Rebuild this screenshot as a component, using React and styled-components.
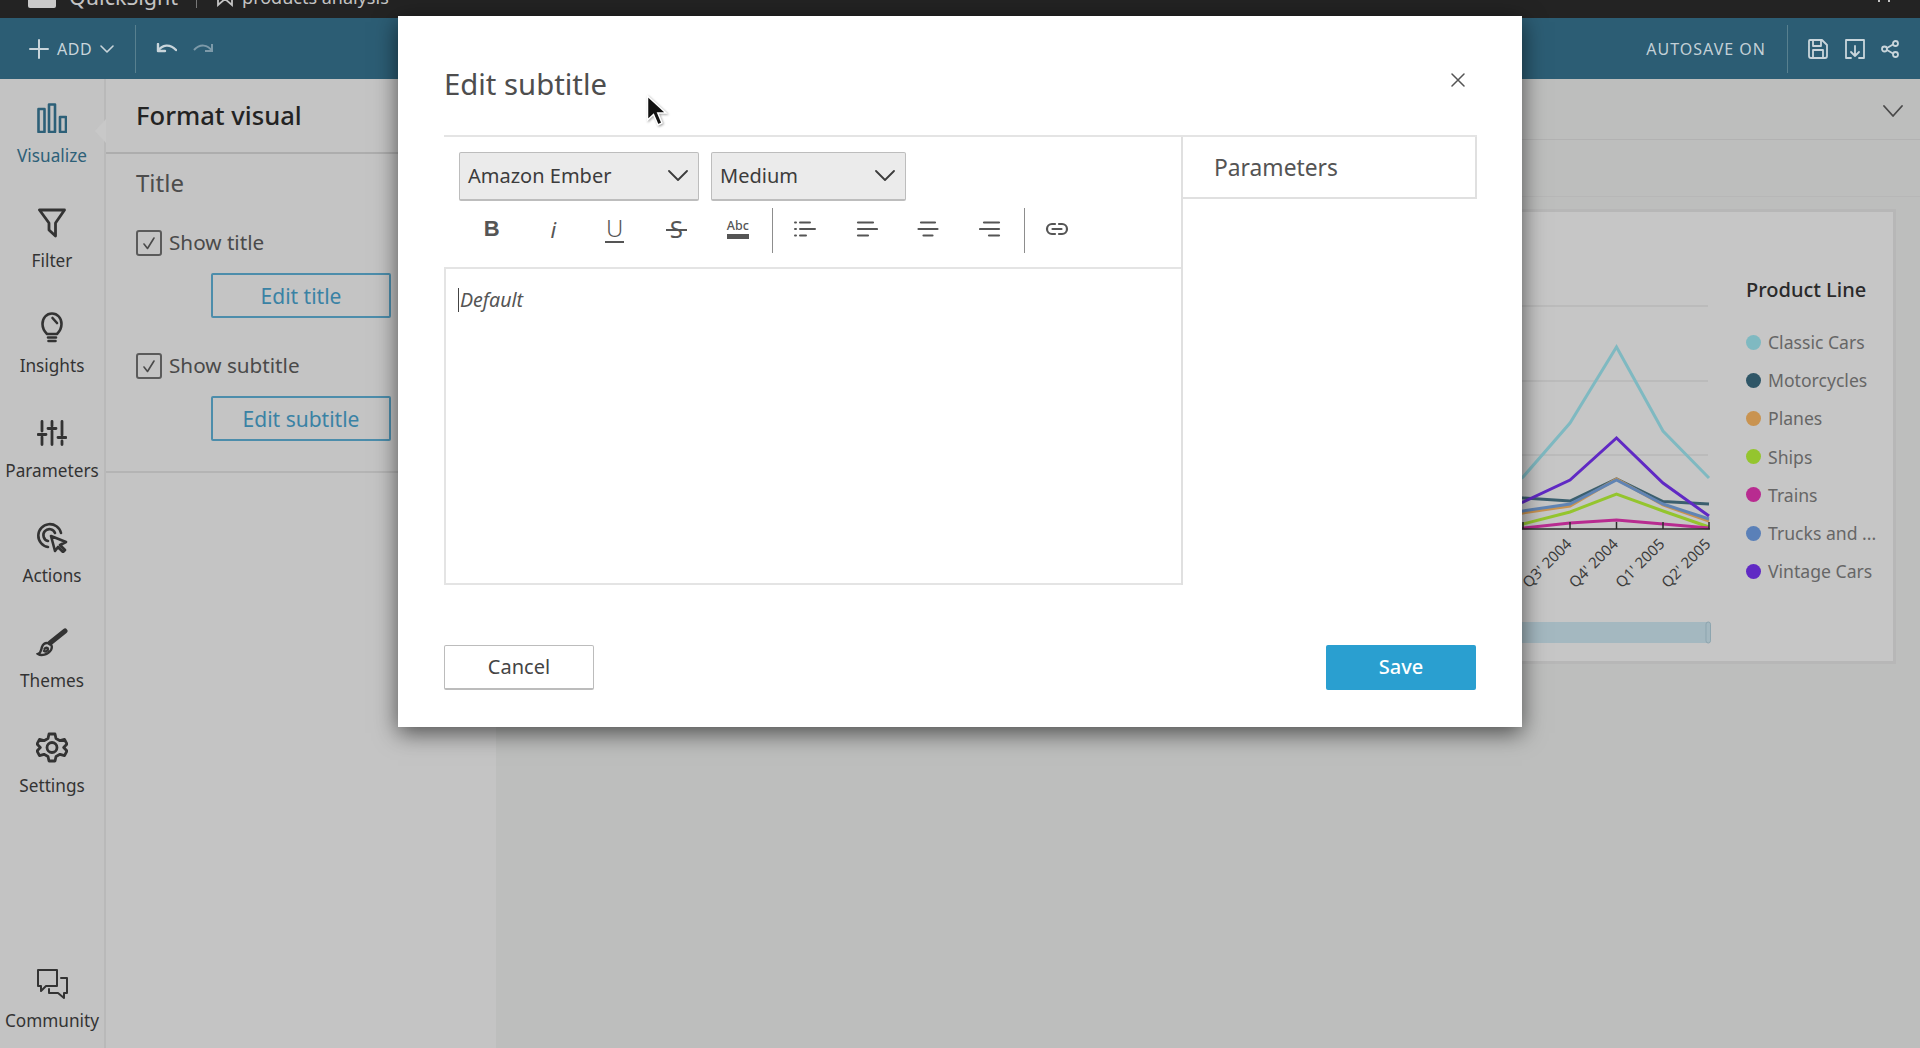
import React from 'react'
import styled, { createGlobalStyle } from 'styled-components'

const GlobalStyle = createGlobalStyle`
    * {
        box-sizing: border-box;
    }
    html, body {
        margin: 0;
        padding: 0;
        overflow: hidden;
    }
    body {
        font-family: 'Noto Sans', 'Open Sans', sans-serif;
        background-color: #bebfbe;
    }
`;

const Page = styled.div`
    position: relative;
    width: 1920px;
    height: 1048px;
    display: flex;
    flex-direction: column;
    overflow: hidden;
`;

const TopBar = styled.div`
    height: 18px;
    flex-shrink: 0;
    background-color: #232323;
    color: #c4c4c4;
    display: flex;
    align-items: flex-end;
    padding: 0 30px 10px 28px;
    overflow: hidden;
`;

const LogoBox = styled.div`
    width: 28px;
    height: 30px;
    background-color: #c9c9c9;
    border-radius: 2px;
`;

const AppName = styled.span`
    font-size: 21.5px;
    line-height: 30px;
    margin: 0 0 -4px 13px;
`;

const TopDivider = styled.span`
    width: 1px;
    height: 20px;
    margin: 0 20px 0 18px;
    background-color: #777;
`;

const BookmarkIcon = styled.svg`
    flex-shrink: 0;
    margin-bottom: 1px;
`;

const AnalysisName = styled.span`
    font-size: 18px;
    line-height: 26px;
    margin: 0 0 -2px 9px;
`;

const TopRight = styled.div`
    margin-left: auto;
    display: flex;
    gap: 8px;
    margin-bottom: 6px;
`;

const Tick = styled.span`
    width: 2px;
    height: 14px;
    background-color: #c4c4c4;
`;

const Toolbar = styled.div`
    height: 61px;
    flex-shrink: 0;
    background-color: #2c5d74;
    color: #c9d5db;
    display: flex;
    align-items: center;
    padding: 0 21px 0 29px;
`;

const AddLabel = styled.span`
    font-size: 16px;
    letter-spacing: 0.5px;
    margin: 0 8px 0 8px;
`;

const BarDivider = styled.span`
    width: 1px;
    height: 48px;
    background-color: #58808f;
    margin: ${(p) => p.$margin};
`;

const HistoryGap = styled.span`
    width: 16px;
`;

const AutoSave = styled.span`
    margin-left: auto;
    font-size: 16px;
    letter-spacing: 1px;
    color: #c3d0d7;
`;

const BarIcons = styled.div`
    display: flex;
    align-items: center;
    gap: 16.5px;
`;

const Workspace = styled.div`
    flex: 1;
    display: flex;
    min-height: 0;
`;

const Rail = styled.nav`
    width: 106px;
    flex-shrink: 0;
    display: flex;
    flex-direction: column;
    padding: 21.5px 0 15px;
    background-color: #c3c3c3;
    border-right: 2px solid #b9b9b9;
`;

const RailItem = styled.div`
    position: relative;
    height: ${(p) => (p.$bottom ? '66px' : '105px')};
    margin-top: ${(p) => (p.$bottom ? 'auto' : '0')};
    display: flex;
    flex-direction: column;
    align-items: center;
    color: ${(p) => (p.$active ? '#2d6078' : '#333')};
`;

const RailIcon = styled.div`
    height: 34px;
    display: flex;
    align-items: center;
    justify-content: center;
    margin-bottom: 9px;
`;

const RailLabel = styled.span`
    font-size: 17.2px;
    line-height: 24px;
    white-space: nowrap;
`;

const Notch = styled.span`
    position: absolute;
    top: 18px;
    right: -2px;
    width: 0;
    height: 0;
    border-top: 12px solid transparent;
    border-bottom: 12px solid transparent;
    border-right: 11px solid #c8c8c8;
`;

const Panel = styled.aside`
    width: 390px;
    flex-shrink: 0;
    background-color: #c4c4c4;
`;

const PanelHeader = styled.div`
    height: 75px;
    display: flex;
    align-items: center;
    padding: 0 30px 1px;
    border-bottom: 2px solid #adadad;
    font-size: 25.6px;
    font-weight: 500;
    color: #232323;
`;

const PanelSection = styled.div`
    padding: 14px 0 30px 30px;
    border-bottom: 2px solid #b4b4b4;
`;

const SectionTitle = styled.div`
    font-size: 24px;
    line-height: 30px;
    color: #4c4c4c;
    margin-bottom: 32px;
`;

const CheckRow = styled.div`
    display: flex;
    align-items: center;
    gap: 7px;
    height: 26px;
    font-size: 20.7px;
    color: #4a4a4a;
`;

const CheckLabel = styled.span`
    margin-bottom: 3px;
`;

const CheckBox = styled.span`
    width: 26px;
    height: 26px;
    display: flex;
    align-items: center;
    justify-content: center;
    border: 2px solid #5b5b5b;
    border-radius: 3px;
`;

const OutlineButton = styled.div`
    width: 180px;
    height: 45px;
    margin: 17px 0 35px 75px;
    display: flex;
    align-items: center;
    justify-content: center;
    border: 2px solid #4c8dab;
    border-radius: 2px;
    font-size: 21px;
    color: #3a82a4;

    &:last-child {
        margin-bottom: 0;
    }
`;

const Main = styled.main`
    flex: 1;
    min-width: 0;
    display: flex;
    flex-direction: column;
    padding: 0 24px;
    background-color: #bdbebd;
`;

const SheetBar = styled.div`
    height: 61px;
    margin-right: -24px;
    padding: 26px 17px 0 0;
    display: flex;
    justify-content: flex-end;
    border-bottom: 1px solid #b2b2b2;
    color: #4a4a4a;
`;

const SheetTabs = styled.div`
    height: 57px;
    margin-right: -24px;
    border-bottom: 1px solid #b7b7b7;
`;

const Card = styled.section`
    height: 455px;
    margin-top: 12px;
    display: flex;
    justify-content: flex-end;
    gap: 16px;
    background-color: #c6c6c6;
    border: 3px solid #b7b7b7;
`;

const Legend = styled.div`
    width: 147px;
    padding-top: 64px;
`;

const LegendTitle = styled.div`
    font-size: 20px;
    font-weight: 500;
    line-height: 28px;
    color: #2a2a2a;
    margin-bottom: 19px;
`;

const LegendRow = styled.div`
    height: 38.2px;
    display: flex;
    align-items: center;
    gap: 7px;
    font-size: 17.6px;
    color: #666;
    white-space: nowrap;
`;

const Dot = styled.span`
    width: 15px;
    height: 15px;
    flex-shrink: 0;
    border-radius: 50%;
    background-color: ${(p) => p.$color};
`;

const ChartSvg = styled.svg`
    flex-shrink: 0;
`;

const Dialog = styled.div`
    position: absolute;
    top: 16px;
    left: 398px;
    width: 1124px;
    height: 711px;
    padding: 0 45px 0 46px;
    background-color: #fff;
    box-shadow: 0 6px 22px rgba(0, 0, 0, 0.6);
    color: #545454;
`;

const DialogHeader = styled.div`
    height: 119px;
    padding: 48px 12px 0 0;
    display: flex;
    justify-content: space-between;
    align-items: flex-start;
`;

const DialogTitle = styled.h2`
    margin: 0;
    font-size: 29.3px;
    font-weight: 400;
    line-height: 40px;
    color: #4e4e4e;
`;

const CloseIcon = styled.div`
    margin-top: 9px;
    line-height: 0;
`;

const DialogBody = styled.div`
    height: 450px;
    display: flex;
    border-top: 2px solid #e4e4e4;
`;

const EditorColumn = styled.div`
    width: 739px;
    flex-shrink: 0;
    display: flex;
    flex-direction: column;
    border-right: 2px solid #e0e0e0;
`;

const SelectRow = styled.div`
    display: flex;
    gap: 12px;
    padding: 15px 0 0 15px;
`;

const FontSelect = styled.div`
    width: ${(p) => p.$width}px;
    height: 49px;
    display: flex;
    align-items: center;
    justify-content: space-between;
    padding: 0 10px 2px 8px;
    background-color: #ebebeb;
    border: 1px solid #bdbdbd;
    border-bottom-width: 2px;
    border-radius: 2px;
    font-size: 20px;
    color: #3c3c3c;
`;

const FormatRow = styled.div`
    height: 45px;
    margin: 7px 0 14px;
    padding-left: 17px;
    display: flex;
    align-items: center;
`;

const ToolButton = styled.div`
    width: 61.5px;
    height: 30px;
    margin-bottom: 3px;
    display: flex;
    align-items: center;
    justify-content: center;
    color: #555;
`;

const BoldGlyph = styled.span`
    font-family: 'Liberation Sans', sans-serif;
    font-size: 22px;
    font-weight: 700;
`;

const ItalicGlyph = styled.span`
    font-size: 22px;
    font-style: italic;
`;

const UnderGlyph = styled.span`
    font-size: 24px;
    line-height: 24px;
    font-weight: 300;
    padding: 0 1px 1px;
    border-bottom: 2px solid #555;
`;

const StrikeGlyph = styled.span`
    position: relative;
    font-size: 24px;
    line-height: 28px;

    &::after {
        content: '';
        position: absolute;
        top: 14px;
        left: -4px;
        right: -4px;
        height: 2px;
        background-color: #555;
    }
`;

const AbcGlyph = styled.span`
    display: flex;
    flex-direction: column;
    align-items: center;
    font-size: 12.5px;
    line-height: 14px;
    font-weight: 500;

    &::after {
        content: '';
        width: 22px;
        height: 5px;
        margin-top: 1px;
        background-color: #555;
    }
`;

const ToolDivider = styled.span`
    width: 1px;
    height: 45px;
    margin: 0 2px 0 3px;
    background-color: #8d8d8d;
`;

const Editor = styled.div`
    flex: 1;
    padding: 19px 0 0 12px;
    border: 2px solid #e4e4e4;
    border-right: none;
    display: flex;
    align-items: flex-start;
`;

const Caret = styled.span`
    width: 1px;
    height: 24px;
    background-color: #444;
`;

const Placeholder = styled.span`
    font-size: 19.6px;
    font-style: italic;
    line-height: 24px;
    margin-left: 1px;
    color: #555;
`;

const ParamColumn = styled.div`
    flex: 1;
`;

const ParamHeader = styled.div`
    height: 62px;
    padding-left: 31px;
    display: flex;
    align-items: center;
    border-right: 2px solid #e0e0e0;
    border-bottom: 2px solid #e0e0e0;
    font-size: 22.8px;
    color: #545454;
`;

const DialogFooter = styled.div`
    margin-top: 60px;
    padding-right: 1px;
    display: flex;
    justify-content: space-between;
    align-items: center;
`;

const CancelButton = styled.div`
    width: 150px;
    height: 45px;
    padding-bottom: 2px;
    display: flex;
    align-items: center;
    justify-content: center;
    background-color: #fff;
    border: 1px solid #bcbcbc;
    border-bottom-width: 2px;
    border-radius: 2px;
    font-size: 20px;
    color: #444;
`;

const SaveButton = styled.div`
    width: 150px;
    height: 45px;
    padding-bottom: 2px;
    display: flex;
    align-items: center;
    justify-content: center;
    background-color: #2a9fd0;
    border-radius: 2px;
    font-size: 20px;
    font-weight: 500;
    color: #fff;
`;

const Cursor = styled.svg`
    position: absolute;
    top: 94px;
    left: 645px;
    filter: drop-shadow(1px 1px 1px rgba(0, 0, 0, 0.35));
`;

const Stroke = ({ w, h, sw = 2.4, children }) => (
  <svg width={w} height={h} viewBox={`0 0 ${w} ${h}`} fill="none" stroke="currentColor" strokeWidth={sw} strokeLinecap="round" strokeLinejoin="round">
    {children}
  </svg>
)

const Chevron = ({ w = 20, h = 11, sw = 1.8 }) => (
  <Stroke w={w} h={h} sw={sw}>
    <path d={`M1 1 L${w / 2} ${h - 1} L${w - 1} 1`} />
  </Stroke>
)

const CheckMark = () => (
  <Stroke w={14} h={14} sw={1.6}>
    <path d="M2 8 L5.5 12.5 L12 2" />
  </Stroke>
)

const railItems = [
  {
    label: 'Visualize',
    active: true,
    icon: (
      <Stroke w={30} h={30} sw={2.6}>
        <rect x="1.5" y="6" width="6" height="23" />
        <rect x="12" y="1.5" width="6" height="27.5" />
        <rect x="23" y="14" width="6" height="15" />
      </Stroke>
    ),
  },
  {
    label: 'Filter',
    icon: (
      <Stroke w={28} h={30} sw={2.8}>
        <path d="M1.5 2 H26.5 L17.5 15 V28 L11 22 V15 Z" />
      </Stroke>
    ),
  },
  {
    label: 'Insights',
    icon: (
      <Stroke w={22} h={31} sw={2.6}>
        <path d="M6 22 C3 19 1.5 16 1.5 12 C1.5 6 5.5 1.5 11 1.5 C16.5 1.5 20.5 6 20.5 12 C20.5 16 19 19 16 22 Z" />
        <path d="M11.5 6 L16 11" />
        <path d="M7 25.5 H15 M7.5 29 H14.5" />
      </Stroke>
    ),
  },
  {
    label: 'Parameters',
    icon: (
      <Stroke w={30} h={26} sw={2.8}>
        <path d="M5 1.5 V11 M5 17 V24.5 M15 1.5 V6 M15 11 V24.5 M25 1.5 V15 M25 21 V24.5" />
        <path d="M1 14.5 H9 M11 8.5 H19 M21 17.5 H29" />
      </Stroke>
    ),
  },
  {
    label: 'Actions',
    icon: (
      <Stroke w={32} h={31} sw={2.6}>
        <path d="M12 25 A11.5 11.5 0 1 1 25 11" />
        <path d="M12 19 A6 6 0 1 1 19 11" />
        <path d="M15 14 L30 20 L24 23 L29 28 L27 30 L22 25 L19 29 Z" />
      </Stroke>
    ),
  },
  {
    label: 'Themes',
    icon: (
      <svg width="32" height="29" viewBox="0 0 32 29" fill="none" stroke="currentColor" strokeLinecap="round">
        <path d="M14 15 L29 3" strokeWidth="5" />
        <path d="M11 15 C15 15 17 18 15 22 C12 27 5 28 2 26 C5 25 5 22 6 19 C7 16 9 15 11 15 Z M8.5 21 C9.5 19 12 19.5 12 21 C12 23 9 24 8 23" strokeWidth="2.4" />
      </svg>
    ),
  },
  {
    label: 'Settings',
    icon: (
      <Stroke w={32} h={31} sw={2.8}>
        <path d="M13 2 H19 L20 6.5 L24 8.7 L28.5 7.3 L31 12 L27.7 15.5 L31 19 L28.5 23.7 L24 22.3 L20 24.5 L19 29 H13 L12 24.5 L8 22.3 L3.5 23.7 L1 19 L4.3 15.5 L1 12 L3.5 7.3 L8 8.7 L12 6.5 Z" />
        <circle cx="16" cy="15.5" r="5" />
      </Stroke>
    ),
  },
]

const chartSeries = [
  { color: '#7fb9c1', points: '1480,505 1523,478 1570,424 1616.5,348 1663,432 1709,479' },
  { color: '#3b5f6e', points: '1480,497 1523,499 1570,502 1616.5,480 1663,502.5 1709,505' },
  { color: '#c99350', points: '1480,520 1523,514 1570,507 1616.5,480 1663,506 1709,522' },
  { color: '#94c52e', points: '1480,530 1523,525 1570,513 1616.5,495 1663,512 1709,528' },
  { color: '#b82b90', points: '1480,530 1523,529 1570,524 1616.5,521 1663,525 1709,529' },
  { color: '#6084b4', points: '1480,518 1523,512 1570,505 1616.5,481 1663,505 1709,520' },
  { color: '#6029c4', points: '1480,512 1523,503 1570,481 1616.5,439 1663,484 1709,517' },
]

const legendItems = [
  ['Classic Cars', '#7fb9c1'],
  ['Motorcycles', '#2f5667'],
  ['Planes', '#c99350'],
  ['Ships', '#94c52e'],
  ['Trains', '#b82b90'],
  ['Trucks and ...', '#5a80b8'],
  ['Vintage Cars', '#6029c4'],
]

const tickLabels = [
  [1570, "Q3' 2004"],
  [1616.5, "Q4' 2004"],
  [1663, "Q1' 2005"],
  [1709, "Q2' 2005"],
]

const LineChart = () => (
  <ChartSvg width="230" height="449" viewBox="1500 213 230 449">
    {[307, 382, 456].map((y) => (
      <line key={y} x1="1480" x2="1708" y1={y} y2={y} stroke="#b7b7b7" strokeWidth="1.5" />
    ))}
    {chartSeries.map((s) => (
      <polyline key={s.color} points={s.points} fill="none" stroke={s.color} strokeWidth="3" />
    ))}
    <line x1="1480" x2="1710" y1="530" y2="530" stroke="#2b2b2b" strokeWidth="1.5" />
    {[1523, 1570, 1616.5, 1663, 1709].map((x) => (
      <line key={x} x1={x} x2={x} y1="523" y2="530" stroke="#2b2b2b" strokeWidth="1.5" />
    ))}
    {tickLabels.map(([x, t]) => (
      <text key={t} x={x - 6.5} y="537" textAnchor="end" fontSize="15" fill="#3c3c3c" fontFamily="'Noto Sans', sans-serif" transform={`rotate(-45 ${x - 6.5} 537)`} dominantBaseline="hanging">
        {t}
      </text>
    ))}
    <rect x="1480" y="623" width="228" height="21" fill="#a4b8c0" />
    <rect x="1706" y="623" width="4.5" height="21" rx="2.2" fill="#a4b8c0" stroke="#8da5af" strokeWidth="1" />
  </ChartSvg>
)

const App = () => {
  return (
    <Page>
      <GlobalStyle />
      <TopBar>
        <LogoBox />
        <AppName>QuickSight</AppName>
        <TopDivider />
        <BookmarkIcon width="16" height="22" viewBox="0 0 16 22" fill="none" stroke="#c4c4c4" strokeWidth="1.8">
          <path d="M1 1 H15 V20 L8 14 L1 20 Z" />
        </BookmarkIcon>
        <AnalysisName>products analysis</AnalysisName>
        <TopRight>
          <Tick />
          <Tick />
        </TopRight>
      </TopBar>

      <Toolbar>
        <Stroke w={20} h={20} sw={2}>
          <path d="M10 1 V19 M1 10 H19" />
        </Stroke>
        <AddLabel>ADD</AddLabel>
        <Chevron w={14} h={8} sw={1.6} />
        <BarDivider $margin="0 20px 0 21px" />
        <Stroke w={21} h={11}>
          <path d="M2 1 V8 H9 M2 8 C6 1.5 14 0.5 20 7" />
        </Stroke>
        <HistoryGap />
        <svg width="21" height="11" viewBox="0 0 21 11" fill="none" stroke="#7d9aa9" strokeWidth="2">
          <path d="M19 1 V8 H12 M19 8 C15 1.5 7 0.5 1 7" />
        </svg>
        <AutoSave>AUTOSAVE ON</AutoSave>
        <BarDivider $margin="0 20px 0 21px" />
        <BarIcons>
          <Stroke w={20} h={20} sw={1.8}>
            <path d="M2 1 H14 L19 6 V17 Q19 19 17 19 H3 Q1 19 1 17 V2 Q1 1 2 1 Z" />
            <path d="M5 1 V7 H13 V1 M5 19 V11 H15 V19" />
          </Stroke>
          <Stroke w={20} h={20} sw={1.8}>
            <path d="M4 1 H19 V19 H14 M6 19 H1 V1 H4" />
            <path d="M10 7 V17 M6 13 L10 17 L14 13" />
          </Stroke>
          <Stroke w={18} h={18} sw={1.8}>
            <circle cx="3.5" cy="9" r="2.5" />
            <circle cx="14.5" cy="3.5" r="2.5" />
            <circle cx="14.5" cy="14.5" r="2.5" />
            <path d="M6 8 L12 4.5 M6 10 L12 13.5" />
          </Stroke>
        </BarIcons>
      </Toolbar>

      <Workspace>
        <Rail>
          {railItems.map((item) => (
            <RailItem key={item.label} $active={item.active}>
              <RailIcon>{item.icon}</RailIcon>
              <RailLabel>{item.label}</RailLabel>
              {item.active && <Notch />}
            </RailItem>
          ))}
          <RailItem $bottom>
            <RailIcon>
              <Stroke w={32} h={31} sw={2}>
                <path d="M2 2 H21 V18 H10 L5 23 V18 H2 Z" />
                <path d="M25 10 H31 V25 H28 V30 L22 25 H13 V21" />
              </Stroke>
            </RailIcon>
            <RailLabel>Community</RailLabel>
          </RailItem>
        </Rail>

        <Panel>
          <PanelHeader>Format visual</PanelHeader>
          <PanelSection>
            <SectionTitle>Title</SectionTitle>
            <CheckRow>
              <CheckBox>
                <CheckMark />
              </CheckBox>
              <CheckLabel>Show title</CheckLabel>
            </CheckRow>
            <OutlineButton>Edit title</OutlineButton>
            <CheckRow>
              <CheckBox>
                <CheckMark />
              </CheckBox>
              <CheckLabel>Show subtitle</CheckLabel>
            </CheckRow>
            <OutlineButton>Edit subtitle</OutlineButton>
          </PanelSection>
        </Panel>

        <Main>
          <SheetBar>
            <Chevron w={20} h={12} sw={1.8} />
          </SheetBar>
          <SheetTabs />
          <Card>
            <LineChart />
            <Legend>
              <LegendTitle>Product Line</LegendTitle>
              {legendItems.map(([name, color]) => (
                <LegendRow key={name}>
                  <Dot $color={color} />
                  {name}
                </LegendRow>
              ))}
            </Legend>
          </Card>
        </Main>
      </Workspace>

      <Dialog>
        <DialogHeader>
          <DialogTitle>Edit subtitle</DialogTitle>
          <CloseIcon>
            <Stroke w={14} h={14} sw={1.5}>
              <path d="M1 1 L13 13 M13 1 L1 13" />
            </Stroke>
          </CloseIcon>
        </DialogHeader>
        <DialogBody>
          <EditorColumn>
            <SelectRow>
              <FontSelect $width={240}>
                Amazon Ember
                <Chevron />
              </FontSelect>
              <FontSelect $width={195}>
                Medium
                <Chevron />
              </FontSelect>
            </SelectRow>
            <FormatRow>
              <ToolButton><BoldGlyph>B</BoldGlyph></ToolButton>
              <ToolButton><ItalicGlyph>i</ItalicGlyph></ToolButton>
              <ToolButton><UnderGlyph>U</UnderGlyph></ToolButton>
              <ToolButton><StrikeGlyph>S</StrikeGlyph></ToolButton>
              <ToolButton><AbcGlyph>Abc</AbcGlyph></ToolButton>
              <ToolDivider />
              <ToolButton>
                <Stroke w={22} h={18} sw={2}>
                  <path d="M1 2.5 H2 M1 9 H2 M1 15.5 H2 M6 2.5 H16 M6 9 H21 M6 15.5 H12" />
                </Stroke>
              </ToolButton>
              <ToolButton>
                <Stroke w={22} h={18} sw={2.2}>
                  <path d="M2 2.5 H17 M2 9 H21 M2 15.5 H12" />
                </Stroke>
              </ToolButton>
              <ToolButton>
                <Stroke w={22} h={18} sw={2.2}>
                  <path d="M4 2.5 H18 M1.5 9 H20.5 M6.5 15.5 H15.5" />
                </Stroke>
              </ToolButton>
              <ToolButton>
                <Stroke w={22} h={18} sw={2.2}>
                  <path d="M5 2.5 H20 M1 9 H20 M10 15.5 H20" />
                </Stroke>
              </ToolButton>
              <ToolDivider />
              <ToolButton>
                <Stroke w={24} h={14} sw={2.2}>
                  <path d="M10 2 H7 A5 5 0 0 0 7 12 H10 M14 2 H17 A5 5 0 0 1 17 12 H14 M7.5 7 H16.5" />
                </Stroke>
              </ToolButton>
            </FormatRow>
            <Editor>
              <Caret />
              <Placeholder>Default</Placeholder>
            </Editor>
          </EditorColumn>
          <ParamColumn>
            <ParamHeader>Parameters</ParamHeader>
          </ParamColumn>
        </DialogBody>
        <DialogFooter>
          <CancelButton>Cancel</CancelButton>
          <SaveButton>Save</SaveButton>
        </DialogFooter>
      </Dialog>

      <Cursor width="24" height="34" viewBox="0 0 24 34">
        <path d="M2.5 2 V26 L8.5 20.5 L13 31 L17 29 L12.8 19 H21 Z" fill="#111" stroke="#fff" strokeWidth="1.5" />
      </Cursor>
    </Page>
  )
}

export default App
